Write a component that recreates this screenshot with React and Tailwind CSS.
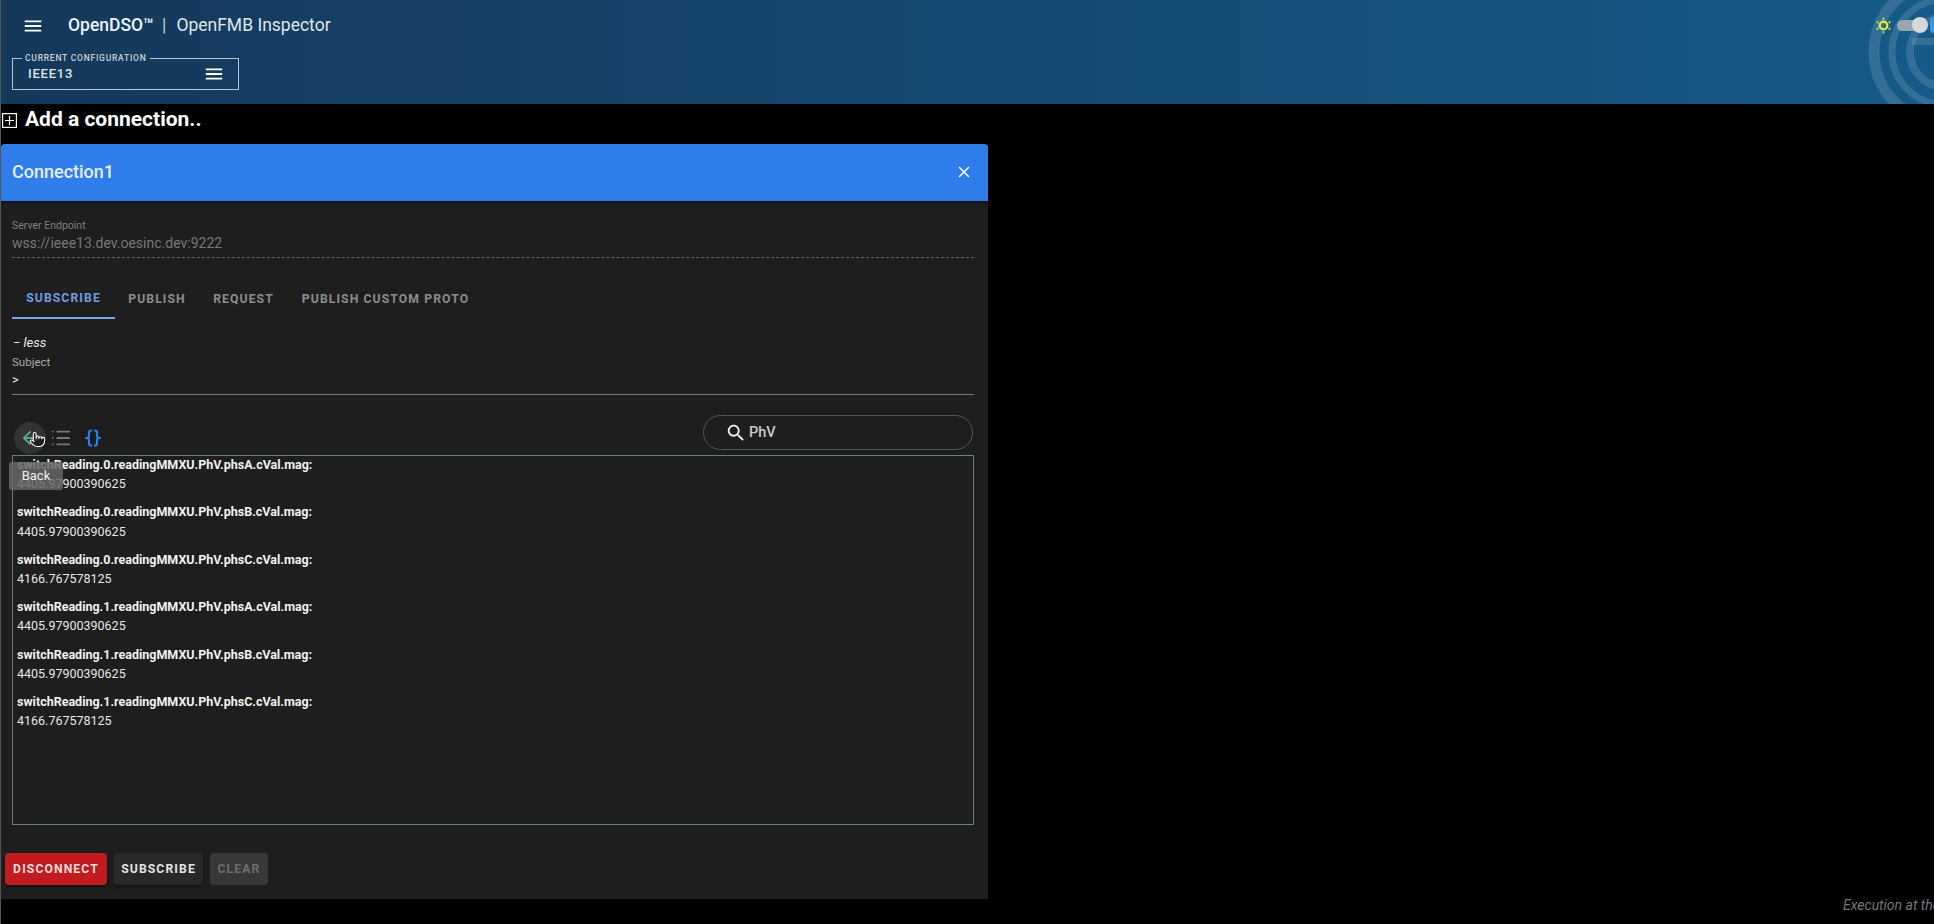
import { List, Pointer, X } from "lucide-react";

const readings = [
  ["switchReading.0.readingMMXU.PhV.phsA.cVal.mag:", "4405.97900390625"],
  ["switchReading.0.readingMMXU.PhV.phsB.cVal.mag:", "4405.97900390625"],
  ["switchReading.0.readingMMXU.PhV.phsC.cVal.mag:", "4166.767578125"],
  ["switchReading.1.readingMMXU.PhV.phsA.cVal.mag:", "4405.97900390625"],
  ["switchReading.1.readingMMXU.PhV.phsB.cVal.mag:", "4405.97900390625"],
  ["switchReading.1.readingMMXU.PhV.phsC.cVal.mag:", "4166.767578125"],
];

function MenuIcon({ className }) {
  return (
    <svg viewBox="0 0 24 24" className={className} fill="currentColor">
      <path d="M3 18h18v-2H3v2zm0-5h18v-2H3v2zm0-7v2h18V6H3z" />
    </svg>
  );
}

function SunIcon() {
  return (
    <svg viewBox="0 0 20 20" className="h-[19px] w-[19px]" fill="none">
      <circle cx="10" cy="10" r="4" stroke="#e4ef3c" strokeWidth="2.4" />
      <path d="M10 1l1.6 2.6H8.4zM10 19l-1.6-2.6h3.2zM2.2 5.5l3 .2-1.5 2.8zM17.8 5.5l-1.5 3-1.6-2.8zM2.2 14.5l1.5-3 1.6 2.8zM17.8 14.5l-3-.2 1.5-2.8z" fill="#cfe04a" />
    </svg>
  );
}

function Logo() {
  return (
    <svg viewBox="0 0 70 104" className="absolute right-0 top-0 h-[104px] w-[70px]" fill="none" stroke="#fff" strokeOpacity="0.13">
      <circle cx="81" cy="52" r="71" strokeWidth="11" />
      <circle cx="81" cy="52" r="53" strokeWidth="7" />
      <circle cx="81" cy="52" r="35" strokeWidth="8" />
      <path d="M48 41.5H70" strokeWidth="7" />
    </svg>
  );
}

export default function App() {
  return (
    <main className="flex h-screen w-full flex-col overflow-hidden border-l border-[#555] bg-black font-['Roboto',sans-serif] text-white">
      {/* Header */}
      <header className="relative h-[104px] shrink-0 bg-gradient-to-r from-[#14385a] to-[#155a88]">
        <Logo />
        <div className="flex h-[50px] items-center">
          <MenuIcon className="ml-[21px] mt-[2px] h-[22px] w-[22px]" />
          <span className="ml-[24px] text-[17.5px] font-medium text-[#eef3f6]">OpenDSO™</span>
          <span className="ml-[8px] text-[17.5px] text-[#c5d2dc]">|</span>
          <span className="ml-[10px] text-[17.5px] text-[#dfe7ed]">OpenFMB Inspector</span>
          <div className="relative ml-auto flex items-center">
            <SunIcon />
            <div className="relative ml-[4px] h-[11px] w-[30px] rounded-full bg-[#9aa7b0]">
              <span className="absolute -top-[3px] left-[15px] h-[16px] w-[16px] rounded-full bg-[#d8d8d8]" />
            </div>
            <span className="ml-[3px] h-[16px] w-[4px] rounded-l-full bg-[#2f9be8]" />
          </div>
        </div>
        <fieldset className="ml-[11px] mt-[4px] h-[36px] w-[227px] border border-[#b5c4cf] pl-[15px] pr-[13px]">
          <legend className="ml-[-6px] px-[3px] text-[8.5px] leading-[9px] font-medium tracking-[0.09em] text-[#c8d3db]">CURRENT CONFIGURATION</legend>
          <div className="flex items-center justify-between">
            <span className="text-[13px] leading-[22px] font-medium tracking-[0.06em] text-[#dfe6eb]">IEEE13</span>
            <MenuIcon className="h-[22px] w-[22px]" />
          </div>
        </fieldset>
      </header>

      {/* Add connection */}
      <div className="mb-[8px] flex h-[32px] shrink-0 items-center">
        <svg viewBox="0 0 15 15" className="ml-[1px] h-[15px] w-[15px]" fill="none" stroke="#fff" strokeWidth="1.2">
          <rect x="0.6" y="0.6" width="13.8" height="13.8" />
          <path d="M7.5 3v9M3 7.5h9" />
        </svg>
        <h2 className="ml-[8px] text-[21px] font-bold">Add a connection..</h2>
      </div>

      {/* Card */}
      <section className="flex h-[755px] w-[987px] shrink-0 flex-col rounded-t-[4px] bg-[#1e1e1e]">
        <div className="flex h-[57px] shrink-0 items-center justify-between rounded-t-[4px] bg-[#2f7dea] pb-[2px] pl-[11px] pr-[15px] shadow-[0_3px_3px_rgba(0,0,0,0.25)]">
          <span className="text-[18px] font-medium text-[#e6f0fd]">Connection1</span>
          <X className="h-[18px] w-[18px] text-[#eef4fd]" strokeWidth={2.2} />
        </div>

        <div className="flex flex-1 flex-col pl-[11px] pr-[14px]">
          {/* Endpoint */}
          <div className="mt-[18px] text-[10.5px] leading-[14px] text-[#808080]">Server Endpoint</div>
          <div className="mt-[1px] border-b border-dashed border-[#666] pb-[5px] text-[14px] leading-[18px] text-[#777]">wss://ieee13.dev.oesinc.dev:9222</div>

          {/* Tabs */}
          <div className="mt-[12px] flex h-[49px] pt-[9px] text-[12.2px] font-bold tracking-[0.09em] text-[#8c8c8c]">
            <div className="flex w-[103px] items-center justify-center border-b-2 border-[#7aa7e8] text-[#6f9be0]">SUBSCRIBE</div>
            <div className="flex w-[84px] items-center justify-center">PUBLISH</div>
            <div className="flex w-[89px] items-center justify-center">REQUEST</div>
            <div className="flex w-[195px] items-center justify-center">PUBLISH CUSTOM PROTO</div>
          </div>

          {/* Subject */}
          <div className="mt-[16px] pl-[1px] text-[13px] leading-[16px] italic text-[#eee]">− less</div>
          <div className="mt-[4px] text-[11.5px] leading-[14px] text-[#aaa]">Subject</div>
          <div className="border-b border-[#777] pb-[7px] pt-[3px] text-[13px] leading-[15px] text-[#eee]">&gt;</div>

          {/* Toolbar */}
          <div className="mt-[20px] flex h-[35px] items-center">
            <div className="mt-[10px] flex items-center">
              <div className="relative ml-[2px] flex h-[32px] w-[32px] items-center justify-center rounded-full bg-[#333]">
                <svg viewBox="0 0 24 24" className="h-[22px] w-[22px]" fill="#5aa898">
                  <path d="M20 11H7.83l5.59-5.59L12 4l-8 8 8 8 1.41-1.41L7.83 13H20v-2z" />
                </svg>
                <Pointer className="absolute left-[15px] top-[9px] h-[17px] w-[17px] fill-[#1e1e1e] text-white" strokeWidth={1.5} />
              </div>
              <List className="ml-[4px] h-[22px] w-[22px] text-[#777]" strokeWidth={2} />
              <svg viewBox="0 0 16 18" className="ml-[13px] h-[18px] w-[16px]" fill="none" stroke="#2f7dea" strokeWidth="2.2">
                <path d="M7 1.5H6a2 2 0 0 0-2 2V7a2 2 0 0 1-2.5 2A2 2 0 0 1 4 11v3.500a2 2 0 0 0 2 2h1" />
                <path d="M9 1.5h1a2 2 0 0 1 2 2V7a2 2 0 0 0 2.500 2A2 2 0 0 0 12 11v3.500a2 2 0 0 1-2 2H9" />
              </svg>
            </div>
            <div className="ml-auto mr-[1px] flex h-[35px] w-[270px] items-center rounded-full border border-[#555] pl-[21px]">
              <svg viewBox="0 0 24 24" className="h-[22px] w-[22px]" fill="#eee">
                <path d="M15.5 14h-.79l-.28-.27C15.41 12.59 16 11.11 16 9.5 16 5.91 13.09 3 9.5 3S3 5.91 3 9.5 5.91 16 9.5 16c1.61 0 3.09-.59 4.23-1.57l.27.28v.79l5 4.99L20.49 19l-4.99-5zm-6 0C7.01 14 5 11.99 5 9.5S7.01 5 9.5 5 14 7.01 14 9.5 11.99 14 9.5 14z" />
              </svg>
              <span className="ml-[2px] text-[14.5px] font-medium text-[#ccc]">PhV</span>
            </div>
          </div>

          {/* Output */}
          <div className="relative mt-[5px] h-[370px] border border-[#66807a] px-[4px]">
            <div className="-mt-[1px]">
              {readings.map(([name, value], i) => (
                <div key={i} className="mb-[9px] h-[38.4px] text-[12.5px] leading-[19.2px] text-[#e8e8e8]">
                  <div className="font-bold text-[#f2f2f2]">{name}</div>
                  <div>{value}</div>
                </div>
              ))}
            </div>
            <div className="absolute -left-[4px] top-[6px] flex h-[28px] w-[54px] items-center justify-center rounded-[3px] bg-[#666]/85 text-[13px] text-[#eee]">Back</div>
          </div>

          {/* Actions */}
          <div className="-ml-[7px] mt-[28px] flex gap-[7px] text-[12.2px] font-bold tracking-[0.09em]">
            <button className="h-[32px] w-[102px] rounded-[4px] bg-[#c11b1f] text-[#f3dcdc] shadow-[0_2px_3px_rgba(0,0,0,0.4)]">DISCONNECT</button>
            <button className="h-[32px] w-[89px] rounded-[4px] bg-[#282828] text-[#e4e4e4] shadow-[0_2px_3px_rgba(0,0,0,0.4)]">SUBSCRIBE</button>
            <button className="h-[32px] w-[58px] rounded-[4px] bg-[#383838] text-[#6e6e6e]">CLEAR</button>
          </div>
        </div>
      </section>

      {/* Footer */}
      <div className="pl-[1842px] whitespace-nowrap text-[14px] leading-[12px] italic text-[#777]">Execution at the edge</div>
    </main>
  );
}
